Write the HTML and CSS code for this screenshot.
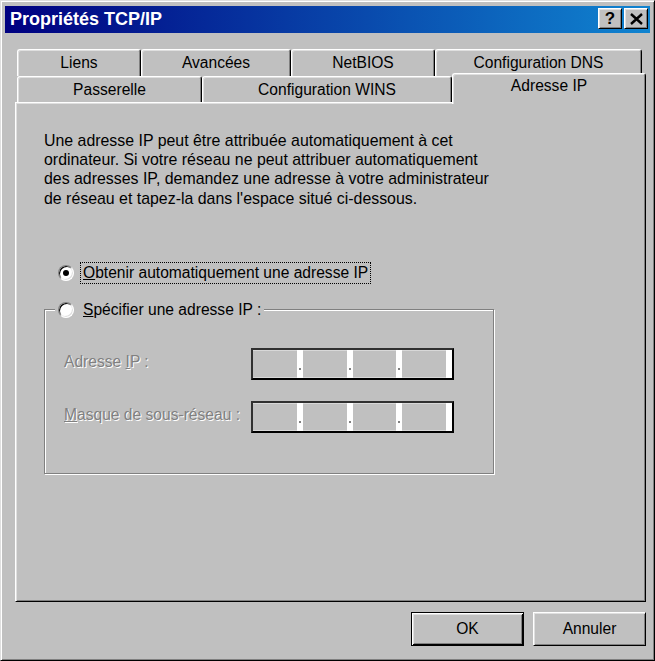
FILE: index.html
```html
<!DOCTYPE html>
<html lang="fr">
<head>
<meta charset="utf-8">
<title>Propriétés TCP/IP</title>
<link rel="stylesheet" href="styles.css">
</head>
<body>
<div class="window">
  <div class="titlebar">
    <span class="title">Propriétés TCP/IP</span>
    <div class="tbtns">
      <span class="tbtn help">?</span>
      <span class="tbtn close"><svg width="13" height="12" viewBox="0 0 13 12"><path d="M1 1 L12 11 M12 1 L1 11" stroke="#000" stroke-width="2.4" fill="none"/></svg></span>
    </div>
  </div>
  <div class="tabs">
    <div class="tabrow back">
      <div class="tab t-liens">Liens</div>
      <div class="tab t-avancees">Avancées</div>
      <div class="tab t-netbios">NetBIOS</div>
      <div class="tab t-dns">Configuration DNS</div>
    </div>
    <div class="tabrow front">
      <div class="tab t-passerelle">Passerelle</div>
      <div class="tab t-wins">Configuration WINS</div>
      <div class="tab t-ip sel">Adresse IP</div>
    </div>
  </div>
  <div class="panel">
    <p class="intro">Une adresse IP peut être attribuée automatiquement à cet<br>ordinateur. Si votre réseau ne peut attribuer automatiquement<br>des adresses IP, demandez une adresse à votre administrateur<br>de réseau et tapez-la dans l'espace situé ci-dessous.</p>
    <div class="option first">
      <span class="radio checked"></span>
      <span class="focus"><u>O</u>btenir automatiquement une adresse IP</span>
    </div>
    <fieldset class="group">
      <legend class="option legend">
        <span class="radio"></span>
        <span class="lbl"><u>S</u>pécifier une adresse IP :</span>
      </legend>
      <div class="grid">
        <span class="dis">Adresse <u>I</u>P :</span>
        <div class="ipfield">
          <span class="seg"></span><span class="sep"><i></i></span>
          <span class="seg"></span><span class="sep"><i></i></span>
          <span class="seg"></span><span class="sep"><i></i></span>
          <span class="seg"></span><span class="sep"></span>
        </div>
        <span class="dis"><u>M</u>asque de sous-réseau :</span>
        <div class="ipfield">
          <span class="seg"></span><span class="sep"><i></i></span>
          <span class="seg"></span><span class="sep"><i></i></span>
          <span class="seg"></span><span class="sep"><i></i></span>
          <span class="seg"></span><span class="sep"></span>
        </div>
      </div>
    </fieldset>
  </div>
  <div class="buttons">
    <button class="btn default">OK</button>
    <button class="btn">Annuler</button>
  </div>
</div>
</body>
</html>
```

FILE: styles.css
```css
html, body {
  margin: 0;
  padding: 0;
  background: #c0c0c0;
}
body {
  font-family: "Liberation Sans", Arial, sans-serif;
  font-size: 15.6px;
  color: #000;
}
.window {
  width: 655px;
  height: 661px;
  box-sizing: border-box;
  background: #c0c0c0;
  border: 1px solid;
  border-color: #dfdfdf #000 #000 #dfdfdf;
  box-shadow: inset 1px 1px #fff, inset -1px -1px #808080;
  padding: 5px 4px 4px 4px;
  display: flex;
  flex-direction: column;
}
.titlebar {
  height: 27px;
  flex: none;
  background: linear-gradient(to right, #000080, #1084d0);
  display: flex;
  align-items: center;
  justify-content: space-between;
  padding: 0 2px 0 5px;
}
.title {
  color: #fff;
  font-weight: bold;
  font-size: 18px;
}
.tbtns {
  display: flex;
  gap: 2px;
  margin-top: -2px;
}
.tbtn {
  width: 24px;
  height: 21px;
  box-sizing: border-box;
  background: #c0c0c0;
  border: 1px solid;
  border-color: #fff #000 #000 #fff;
  box-shadow: inset 1px 1px #dfdfdf, inset -1px -1px #808080;
  display: flex;
  align-items: center;
  justify-content: center;
}
.help {
  font-weight: bold;
  font-size: 17px;
  line-height: 1;
}
.tabs {
  margin-top: 16px;
  margin-left: 12px;
  flex: none;
}
.tabrow {
  display: flex;
}
.tabrow.back {
  height: 27px;
}
.tabrow.front {
  height: 26px;
}
.tab {
  box-sizing: border-box;
  height: 100%;
  background: #c0c0c0;
  border: 1px solid;
  border-bottom: none;
  border-color: #fff #000 #000 #fff;
  box-shadow: inset 1px 1px #dfdfdf, inset -1px 0 #808080;
  border-radius: 3px 3px 0 0;
  display: flex;
  align-items: center;
  justify-content: center;
}
.t-liens { width: 124px; }
.t-avancees { width: 150px; }
.t-netbios { width: 144px; }
.t-dns { width: 207px; }
.t-passerelle { width: 185px; }
.t-wins { width: 250px; }
.t-ip { width: 194px; }
.tab.sel {
  position: relative;
  z-index: 1;
  height: 31px;
  margin-top: -3px;
  padding-bottom: 6px;
}
.panel {
  flex: none;
  margin-left: 10px;
  width: 631px;
  height: 500px;
  box-sizing: border-box;
  border: 1px solid;
  border-color: #fff #000 #000 #fff;
  box-shadow: inset 1px 1px #dfdfdf, inset -1px -1px #808080;
  padding: 28px 0 0 28px;
}
.intro {
  margin: 0;
  font-size: 15.9px;
  line-height: 19.2px;
}
.option {
  display: flex;
  align-items: center;
  height: 22px;
}
.option.first {
  margin-top: 54px;
  margin-left: 14px;
}
.radio {
  width: 16px;
  height: 16px;
  box-sizing: border-box;
  border-radius: 50%;
  background: #fff;
  border: 1px solid;
  border-color: #808080 #fff #fff #808080;
  box-shadow: inset 1px 1px #000, inset -1px -1px #dfdfdf;
  display: flex;
  align-items: center;
  justify-content: center;
  flex: none;
}
.radio.checked::after {
  content: "";
  width: 6px;
  height: 6px;
  border-radius: 50%;
  background: #000;
}
.focus {
  margin-left: 7px;
  padding: 0 2px;
  line-height: 20px;
  outline: 1px dotted #000;
}
.group {
  margin: 15px 0 0 0;
  width: 450px;
  height: 175px;
  box-sizing: border-box;
  padding: 0;
  border: 1px solid #808080;
  box-shadow: inset 1px 1px #fff, 1px 1px #fff;
}
.legend {
  margin-left: 10px;
  padding: 0 3px;
  background: #c0c0c0;
}
.legend .lbl {
  margin-left: 9px;
}
.grid {
  display: grid;
  grid-template-columns: 187px 203px;
  row-gap: 21px;
  align-items: center;
  padding: 27px 0 0 19px;
}
.dis {
  color: #808080;
  text-shadow: 1px 1px 0 #fff;
  margin-top: -3px;
}
.ipfield {
  display: flex;
  height: 32px;
  box-sizing: border-box;
  border: 2px solid #000;
  border-color: #303030 #000 #000 #303030;
  box-shadow: inset 0 1px #d8d8d8, inset 0 -1px #d8d8d8;
  background: #c0c0c0;
}
.seg {
  flex: 1;
}
.sep {
  width: 6px;
  background: #fff;
  display: flex;
  justify-content: center;
  align-items: flex-end;
  padding-bottom: 8px;
  box-sizing: border-box;
}
.sep i {
  width: 2px;
  height: 2px;
  background: #808080;
}
.buttons {
  display: flex;
  justify-content: flex-end;
  gap: 9px;
  margin-top: 10px;
  padding-right: 4px;
}
.btn {
  width: 113px;
  height: 34px;
  box-sizing: border-box;
  font-family: "Liberation Sans", Arial, sans-serif;
  font-size: 15.6px;
  color: #000;
  background: #c0c0c0;
  border: 1px solid;
  border-color: #fff #000 #000 #fff;
  box-shadow: inset 1px 1px #dfdfdf, inset -1px -1px #808080;
  padding: 0;
}
.btn.default {
  border-color: #000;
  box-shadow: inset 1px 1px #fff, inset -1px -1px #000, inset 2px 2px #dfdfdf, inset -2px -2px #808080;
}
```
